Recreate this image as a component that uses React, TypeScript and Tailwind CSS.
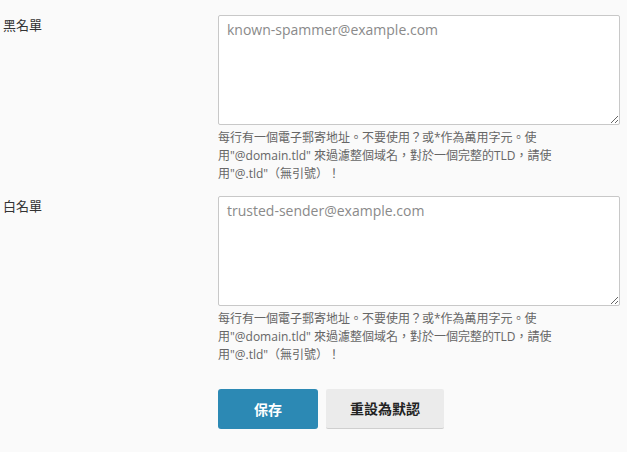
import React from 'react';

const HELP = (
  <>
    每行有一個電子郵寄地址。不要使用？或*作為萬用字元。使
    <br />
    用"@domain.tld" 來過濾整個域名，對於一個完整的TLD，請使
    <br />
    用"@.tld"（無引號）！
  </>
);

function Field({ label, placeholder }: { label: string; placeholder: string }) {
  return (
    <div className="flex">
      <label className="w-[218px] shrink-0 pl-[3px] pt-[0px] text-[13px] leading-[20px] text-[#333]">{label}</label>
      <div className="flex flex-col">
        <textarea
          placeholder={placeholder}
          className="h-[110px] w-[402px] resize-y rounded-[2px] border border-[#c8c8c8] bg-white px-[8px] py-[3px] text-[14px] leading-[22px] text-[#333] placeholder:text-[#8a8a8a] outline-none"
        />
        <p className="mt-[4px] text-[12px] leading-[18px] text-[#666]">{HELP}</p>
      </div>
    </div>
  );
}

export default function App() {
  return (
    <div
      className="min-h-screen bg-[#fafafa] pt-[15px]"
      style={{ fontFamily: '"Open Sans", "Noto Sans CJK TC", sans-serif' }}
    >
      <div className="flex flex-col gap-[13px]">
        <Field label="黑名單" placeholder="known-spammer@example.com" />
        <Field label="白名單" placeholder="trusted-sender@example.com" />
      </div>
      <div className="mt-[25px] flex gap-[8px] pl-[218px]">
        <button className="h-[40px] w-[100px] rounded-[3px] bg-[#2c89b4] text-[14px] font-bold text-white">保存</button>
        <button className="h-[40px] w-[118px] rounded-[2px] border-b border-[#cfcfcf] bg-[#ebebeb] text-[14px] font-bold text-[#222]">重設為默認</button>
      </div>
    </div>
  );
}
